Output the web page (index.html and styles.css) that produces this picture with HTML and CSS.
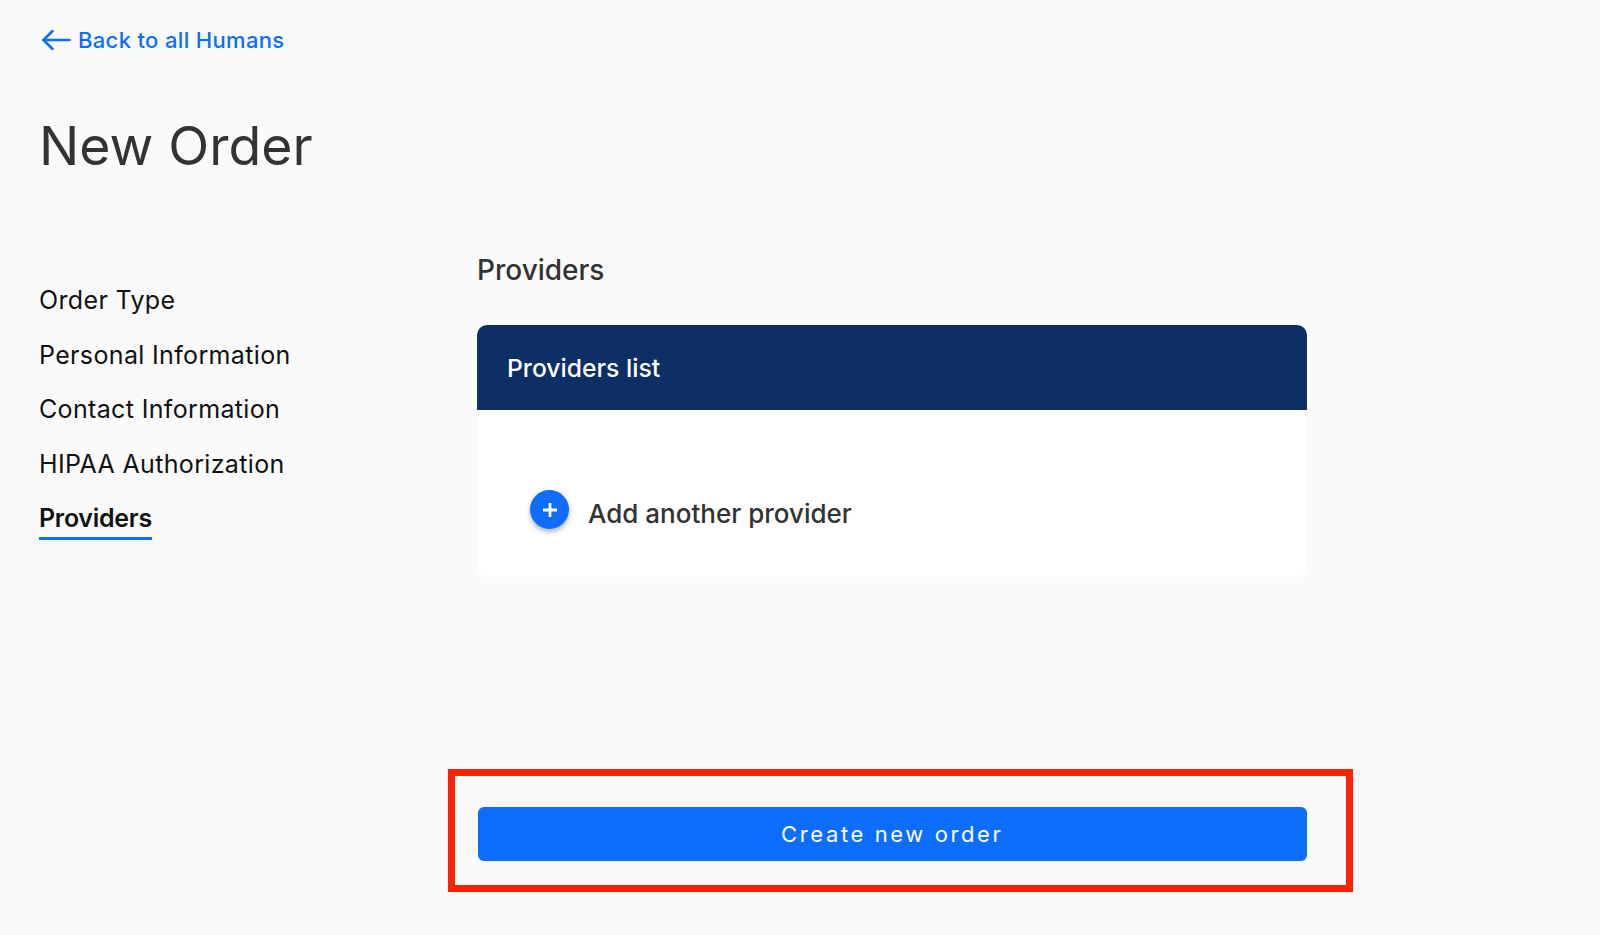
FILE: index.html
```html
<!DOCTYPE html>
<html lang="en">
<head>
  <meta charset="UTF-8">
  <meta name="viewport" content="width=device-width, initial-scale=1.0">
  <title>New Order</title>
  <link rel="stylesheet" href="styles.css">
</head>
<body>
  <a class="back-link" href="#">
    <svg class="back-arrow" width="29" height="20" viewBox="0 0 29 20" fill="none" stroke="#0d6efd" stroke-width="2.6" stroke-linecap="round" stroke-linejoin="round">
      <path d="M1.5 10H27.5"/>
      <path d="M10.5 1L1.5 10L10.5 19"/>
    </svg>
    <span>Back to all Humans</span>
  </a>

  <h1 class="page-title">New Order</h1>

  <div class="columns">
    <ul class="steps">
      <li>Order Type</li>
      <li>Personal Information</li>
      <li>Contact Information</li>
      <li>HIPAA Authorization</li>
      <li class="active"><span>Providers</span></li>
    </ul>

    <section class="content">
      <h2>Providers</h2>
      <div class="card">
        <div class="card-header">Providers list</div>
        <div class="card-body">
          <span class="add-btn">
            <svg width="16" height="16" viewBox="0 0 16 16" stroke="#fff" stroke-width="2.8">
              <path d="M8 1V15M1 8H15"/>
            </svg>
          </span>
          <span class="add-text">Add another provider</span>
        </div>
      </div>
    </section>
  </div>

  <div class="submit-box">
    <button class="submit-btn">Create new order</button>
  </div>
</body>
</html>
```

FILE: styles.css
```css
* {
  box-sizing: border-box;
}

body {
  margin: 0;
  height: 935px;
  overflow: hidden;
  font-family: 'Inter', 'Liberation Sans', sans-serif;
  background-color: #fafafa;
  color: #333;
}

.back-link {
  display: flex;
  align-items: center;
  gap: 7px;
  margin: 30px 0 0 42px;
  height: 20px;
  color: #0d6efd;
  text-decoration: none;
  font-size: 22px;
  letter-spacing: 0.34px;
  font-weight: 500;
}

.page-title {
  margin: 62px 0 0 39px;
  height: 68px;
  font-size: 53.5px;
  line-height: 68px;
  font-weight: 400;
  color: #333;
}

.columns {
  display: grid;
  grid-template-columns: 477px 830px;
  margin-top: 67px;
  height: 522px;
}

.steps {
  list-style: none;
  margin: 0;
  padding: 36px 0 0 39px;
  font-size: 25px;
  letter-spacing: 0.35px;
  color: #111;
}

.steps li {
  height: 54.5px;
  line-height: 34px;
}

.steps .active {
  font-weight: 600;
  letter-spacing: -0.3px;
}

.steps .active span {
  display: inline-block;
  height: 39px;
  border-bottom: 3px solid #0d6efd;
}

.content h2 {
  margin: 0;
  height: 78px;
  padding-top: 5px;
  font-size: 28px;
  line-height: 36px;
  font-weight: 500;
  color: #333;
}

.card {
  height: 252px;
  background: #fff;
  border-radius: 10px;
  overflow: hidden;
}

.card-header {
  height: 85px;
  padding: 0 30px;
  display: flex;
  align-items: center;
  background: #0d2f66;
  color: #fff;
  font-size: 24.7px;
  font-weight: 500;
}

.card-body {
  display: flex;
  align-items: flex-start;
  padding: 80px 0 0 53px;
}

.add-btn {
  display: flex;
  align-items: center;
  justify-content: center;
  width: 39px;
  height: 39px;
  border-radius: 50%;
  background: #0d6efd;
  box-shadow: 0 3px 5px rgba(0,0,0,0.3);
}

.add-text {
  margin: 5px 0 0 19px;
  font-size: 26px;
  line-height: 38px;
  font-weight: 500;
  color: #333;
}

.submit-box {
  width: 905px;
  height: 123px;
  margin: 0 0 0 448px;
  padding: 31px 0 0 22.5px;
  border: 7.5px solid #ff2200;
}

.submit-btn {
  display: block;
  width: 829.5px;
  height: 54px;
  border: none;
  border-radius: 6px;
  background: #0d6efd;
  color: #fff;
  font-family: inherit;
  font-size: 22px;
  letter-spacing: 2.6px;
}
```
